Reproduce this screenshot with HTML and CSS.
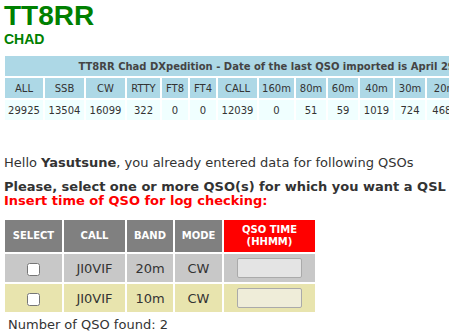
FILE: index.html
```html
<!DOCTYPE html>
<html>
<head>
<meta charset="utf-8">
<link rel="stylesheet" href="styles.css">
</head>
<body>
<h1 class="call">TT8RR</h1>
<div class="country">CHAD</div>

<table class="stats">
  <tr>
    <th class="stats-title" colspan="16">TT8RR Chad DXpedition - Date of the last QSO imported is April 29, 2024</th>
  </tr>
  <tr class="stats-head">
    <td class="c-all">ALL</td>
    <td class="c-ssb">SSB</td>
    <td class="c-cw">CW</td>
    <td class="c-rtty">RTTY</td>
    <td class="c-ft">FT8</td>
    <td class="c-ft">FT4</td>
    <td class="c-call">CALL</td>
    <td class="c-160">160m</td>
    <td class="c-band">80m</td>
    <td class="c-band">60m</td>
    <td class="c-40">40m</td>
    <td class="c-band">30m</td>
    <td class="c-20">20m</td>
    <td class="c-band">17m</td>
    <td class="c-band">15m</td>
    <td class="c-band">10m</td>
  </tr>
  <tr class="stats-data">
    <td>29925</td>
    <td>13504</td>
    <td>16099</td>
    <td>322</td>
    <td>0</td>
    <td>0</td>
    <td>12039</td>
    <td>0</td>
    <td>51</td>
    <td>59</td>
    <td>1019</td>
    <td>724</td>
    <td>4687</td>
    <td>6921</td>
    <td>7410</td>
    <td>4839</td>
  </tr>
</table>

<p class="hello">Hello <b>Yasutsune</b>, you already entered data for following QSOs</p>
<p class="please">Please, select one or more QSO(s) for which you want a QSL</p>
<p class="insert">Insert time of QSO for log checking:</p>

<table class="qso">
  <tr>
    <th class="q-select">SELECT</th>
    <th class="q-call">CALL</th>
    <th class="q-band">BAND</th>
    <th class="q-mode">MODE</th>
    <th class="q-time">QSO TIME<br>(HHMM)</th>
  </tr>
  <tr class="row-a">
    <td><input type="checkbox"></td>
    <td>JI0VIF</td>
    <td>20m</td>
    <td>CW</td>
    <td><input class="time" type="text"></td>
  </tr>
  <tr class="row-b">
    <td><input type="checkbox"></td>
    <td>JI0VIF</td>
    <td>10m</td>
    <td>CW</td>
    <td><input class="time" type="text"></td>
  </tr>
</table>

<p class="count">Number of QSO found: 2</p>
</body>
</html>
```

FILE: styles.css
```css
html {
  overflow: hidden;
}

body {
  margin: 0;
  padding: 0 0 0 3px;
  font-family: "DejaVu Sans", Verdana, sans-serif;
  color: #333;
  background: #fff;
}

.call {
  margin: 0 0 0 1px;
  font-family: "Liberation Sans", Arial, sans-serif;
  font-size: 28px;
  line-height: 31px;
  font-weight: bold;
  color: #008000;
}

.country {
  margin-left: 1px;
  font-family: "Liberation Sans", Arial, sans-serif;
  font-size: 14px;
  line-height: 16px;
  font-weight: bold;
  color: #008000;
}

.stats {
  width: max-content;
  margin-top: 7px;
  border-collapse: separate;
  border-spacing: 2px;
  font-size: 10px;
  white-space: nowrap;
}

.stats td,
.stats th {
  padding: 0 3px;
  text-align: center;
}

.stats-title {
  height: 20px;
  background: #add8e6;
  color: #444;
  font-size: 10px;
  font-weight: bold;
}

.stats-head td {
  height: 20px;
  background: #add8e6;
}

.stats-data td {
  height: 20px;
  background: #f0ffff;
}

.c-all { width: 32px; }
.c-ssb { width: 33px; }
.c-cw { width: 33px; }
.c-rtty { width: 27px; }
.c-ft { width: 20px; }
.c-call { width: 33px; }
.c-160 { width: 29px; }
.c-band { width: 24px; }
.c-40 { width: 27px; }
.c-20 { width: 30px; }

.hello {
  margin: 33px 0 0 1px;
  font-size: 13px;
  line-height: 16px;
}

.please {
  margin: 9px 0 0 1px;
  font-size: 13px;
  line-height: 14px;
  font-weight: bold;
}

.insert {
  margin: 0 0 0 1px;
  font-size: 13px;
  line-height: 14px;
  font-weight: bold;
  color: #ff0000;
}

.qso {
  margin-top: 10px;
  border-collapse: separate;
  border-spacing: 2px;
  table-layout: fixed;
}

.qso th {
  height: 32px;
  padding: 0;
  background: #808080;
  color: #fff;
  font-size: 10px;
  line-height: 12px;
  font-weight: bold;
  text-align: center;
}

.qso th.q-time {
  background: #ff0000;
}

.q-select { width: 57px; }
.q-call { width: 61px; }
.q-band { width: 46px; }
.q-mode { width: 47px; }
.q-time { width: 91px; }

.qso td {
  height: 28px;
  padding: 0;
  text-align: center;
  font-size: 13px;
}

.row-a td {
  background: #c8c8c8;
}

.row-b td {
  background: #e8e4ae;
}

.qso input[type="checkbox"] {
  margin: 0;
  width: 13px;
  height: 13px;
  vertical-align: middle;
}

.time {
  box-sizing: border-box;
  width: 65px;
  height: 20px;
  padding: 0 3px;
  border: 1px solid #aaa;
  border-radius: 2px;
  vertical-align: middle;
  font-size: 12px;
}

.row-a .time {
  background: #e4e4e4;
}

.row-b .time {
  background: #efedd9;
}

.count {
  margin: 3px 0 0 5px;
  font-size: 13px;
  line-height: 16px;
}
```
